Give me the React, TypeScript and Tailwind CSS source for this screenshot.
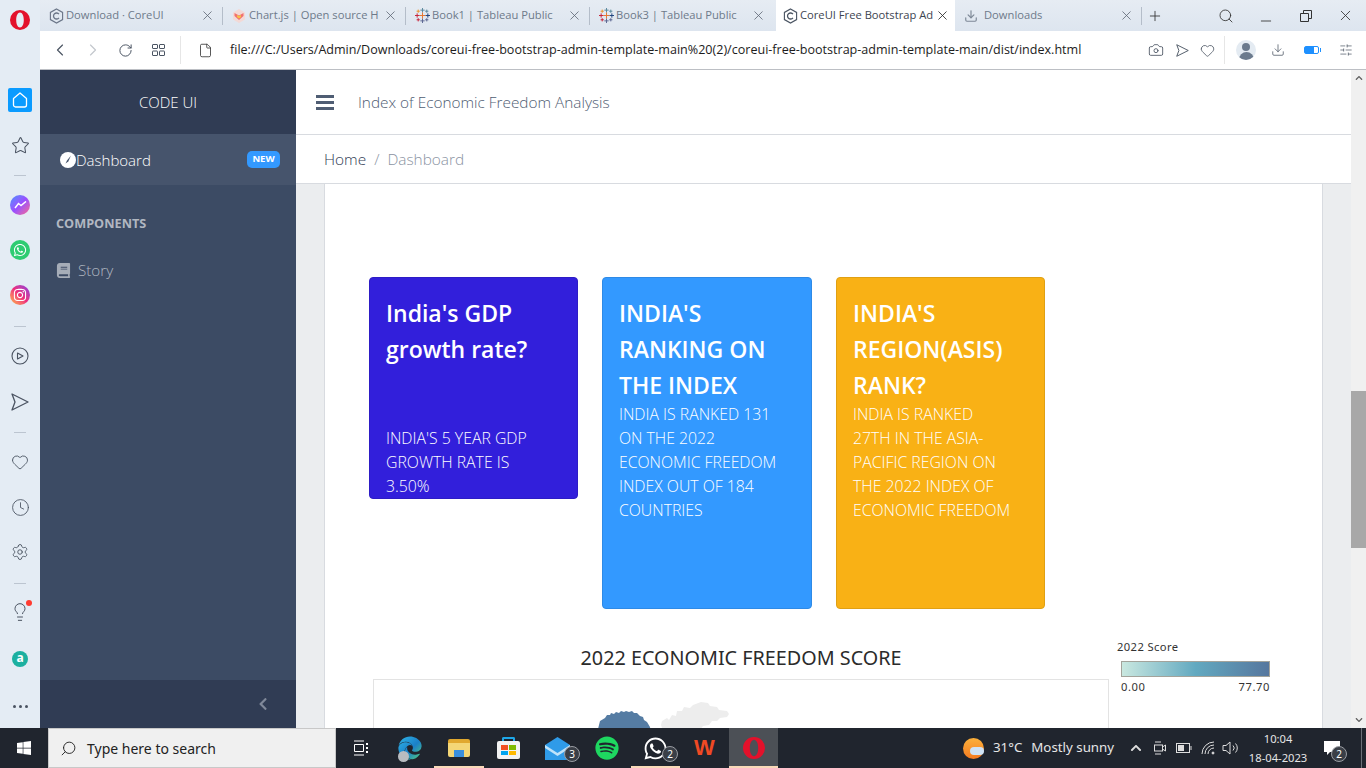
import { ChevronLeft, ChevronRight, RotateCw, File, Camera, Heart, Download, SlidersHorizontal, Star, X, Plus, Search, Minus, Clock, Settings, Lightbulb } from 'lucide-react';
import { FaWhatsapp, FaInstagram, FaSpotify, FaWindows, FaChevronUp, FaChevronDown, FaChevronLeft, FaBook, FaEdge } from 'react-icons/fa';
import type { ReactNode } from 'react';

function CoreIcon({ dark }: { dark?: boolean }) {
  const color = dark ? '#4b5563' : '#6b7688';
  return (
    <svg width="15" height="16" viewBox="0 0 16 17" fill="none" stroke={color} strokeWidth="1.2">
      <path d="M8 1l6.5 3.7v7.6L8 16l-6.5-3.7V4.7z" />
      <path d="M10.6 6.6A3.2 3.2 0 1 0 10.6 10.4" strokeWidth="1.4" />
    </svg>
  );
}

function TableauIcon() {
  const marks: [number, number, string, number][] = [
    [7, 7, '#e8762d', 3], [7, 2, '#59879b', 2], [7, 12, '#5b6591', 2],
    [2, 7, '#c72037', 2], [12, 7, '#1f447e', 2], [3, 3, '#eb912b', 1.5], [11, 3, '#59879b', 1.5],
    [3, 11, '#c72037', 1.5], [11, 11, '#5b6591', 1.5],
  ];
  return (
    <svg width="15" height="15" viewBox="0 0 14 14" fill="none" strokeWidth="0.9">
      {marks.map(([x, y, c, r]) => (
        <path key={`${x}-${y}`} stroke={c} d={`M${x - r} ${y}H${x + r}M${x} ${y - r}V${y + r}`} />
      ))}
    </svg>
  );
}

function ChartIcon() {
  return (
    <svg width="14" height="14" viewBox="0 0 14 14">
      <path d="M7 0l6 3.5v7L7 14l-6-3.5v-7z" fill="#f3d9d6" />
      <path d="M2.5 4l4.5 2.5L11.5 4v3L7 11 2.5 7z" fill="#f2716d" />
      <path d="M5 6l2 1 2-1v2L7 9.5 5 8z" fill="#f6c343" />
    </svg>
  );
}

function OperaLogo({ size }: { size: number }) {
  return (
    <svg width={size} height={size} viewBox="0 0 20 20">
      <path fillRule="evenodd" fill="#e3112b" d="M10 0a10 10 0 1 0 0 20 10 10 0 0 0 0-20zm0 2.5c2.3 0 3.8 3.3 3.8 7.5s-1.5 7.5-3.8 7.5S6.2 14.2 6.2 10 7.7 2.5 10 2.5z" />
    </svg>
  );
}

function SendArrow({ size, color }: { size: number; color: string }) {
  return (
    <svg width={size} height={size} viewBox="0 0 18 18" fill="none" stroke={color} strokeWidth="1.3" strokeLinejoin="round">
      <path d="M1 1l16 8-16 8 3-8z" />
    </svg>
  );
}

function Tab({ w, icon, label, active, noDivider, xColor, labelClass }: { w: string; icon: ReactNode; label: string; active?: boolean; noDivider?: boolean; xColor?: string; labelClass?: string }) {
  return (
    <div className={`${w} h-full flex items-center shrink-0 ${active ? 'bg-white' : ''}`}>
      <span className="w-[16px] flex justify-center shrink-0">{icon}</span>
      <span className={`${labelClass ?? 'ml-[2px]'} flex-1 min-w-0 whitespace-nowrap text-[11.2px] ${active ? 'text-[#3c4450]' : 'text-[#6e7a8a]'}`}>{label}</span>
      <X size={15} strokeWidth={1.3} color={xColor ?? '#5f6875'} className="ml-[4px] shrink-0" />
      {!noDivider && <span className="ml-[7px] w-px h-[18px] bg-[#b4bdc9] shrink-0" />}
    </div>
  );
}

function TabStrip() {
  return (
    <div className="h-[31px] flex items-stretch bg-gradient-to-b from-[#e6ecf3] to-[#dde5ef]">
      <Tab w="w-[183px] pl-2" icon={<CoreIcon />} label="Download · CoreUI" />
      <Tab w="w-[183px] pl-2" icon={<ChartIcon />} label="Chart.js | Open source H" />
      <Tab w="w-[184px] pl-2" icon={<TableauIcon />} label="Book1 | Tableau Public" />
      <Tab w="w-[186px] pl-2 pr-[10px]" icon={<TableauIcon />} label="Book3 | Tableau Public" noDivider />
      <Tab w="w-[179px] pl-[6px] pr-[5px]" icon={<CoreIcon dark />} label="CoreUI Free Bootstrap Ad" active noDivider xColor="#222" />
      <Tab w="w-[187px] pl-2" icon={<Download size={14} color="#7d8896" />} label="Downloads" labelClass="ml-[5px]" />
      <div className="flex items-center flex-1">
        <Plus size={16} strokeWidth={1.3} color="#333" className="ml-[5px]" />
        <Search size={16} strokeWidth={1.3} color="#333" className="ml-[55px]" />
        <Minus size={16} strokeWidth={1.3} color="#333" className="ml-[24px] mt-[10px]" />
        <svg width="12" height="12" viewBox="0 0 12 12" fill="none" stroke="#333" className="ml-[26px]">
          <path d="M0.5 3.5h8v8h-8zM3.5 3.5v-3h8v8h-3" />
        </svg>
        <X size={17} strokeWidth={1.2} color="#333" className="ml-[25px]" />
      </div>
    </div>
  );
}

function AddressBar() {
  return (
    <div className="h-[39px] bg-white border-b border-[#bcbfc4] flex items-center text-[#4b5563]">
      <ChevronLeft size={20} strokeWidth={1.4} className="ml-[10px]" />
      <ChevronRight size={20} strokeWidth={1.4} color="#c3c7cd" className="ml-[13px]" />
      <RotateCw size={15} strokeWidth={1.6} className="ml-[15px]" />
      <svg width="13" height="12" viewBox="0 0 13 12" fill="none" stroke="#4b5563" className="ml-[19px]">
        <rect x="0.5" y="0.5" width="5" height="4" rx="0.5" />
        <rect x="7.5" y="0.5" width="5" height="4" rx="0.5" />
        <rect x="0.5" y="7" width="5" height="4.5" rx="0.5" />
        <rect x="7.5" y="7" width="5" height="4.5" rx="0.5" />
      </svg>
      <span className="ml-[15px] w-px h-[28px] bg-[#e6e6e6]" />
      <File size={15} strokeWidth={1.3} color="#333" className="ml-[17px]" />
      <span className="ml-[17px] w-[902px] text-[12.55px] text-[#1c1c1c] whitespace-nowrap">
        file:///C:/Users/Admin/Downloads/coreui-free-bootstrap-admin-template-main%20(2)/coreui-free-bootstrap-admin-template-main/dist/index.html
      </span>
      <Camera size={16} strokeWidth={1.3} className="ml-[16px]" />
      <span className="ml-[12px]"><SendArrow size={13} color="#4b5563" /></span>
      <Heart size={15} strokeWidth={1.3} className="ml-[11px]" />
      <span className="ml-[9px] w-px h-[28px] bg-[#e6e6e6]" />
      <span className="ml-[11px] w-[20px] h-[20px] rounded-full bg-[#e4ebf2] overflow-hidden flex flex-col items-center">
        <span className="mt-[3px] w-[8px] h-[8px] rounded-full bg-[#6b7a8d]" />
        <span className="mt-[1px] w-[15px] h-[8px] rounded-t-full bg-[#6b7a8d]" />
      </span>
      <Download size={14} strokeWidth={1.3} className="ml-[15px]" />
      <span className="ml-[19px] flex items-center">
        <span className="w-[15px] h-[8px] rounded-[2px] border border-[#1e90ff] bg-gradient-to-r from-[#1e90ff] from-70% to-white to-70%" />
        <span className="w-[1px] h-[4px] bg-[#1e90ff] ml-px" />
      </span>
      <SlidersHorizontal size={14} strokeWidth={1.2} className="ml-[18px]" />
    </div>
  );
}

function RailSlot({ h, children }: { h: string; children?: ReactNode }) {
  return <div className={`${h} flex items-center justify-center w-full shrink-0`}>{children}</div>;
}

const RailSep = () => <span className="w-[12px] h-px bg-[#bcc5d0]" />;

function LeftRail() {
  const stroke = '#4a5361';
  return (
    <div className="w-[40px] shrink-0 h-full bg-[#e4ecf4] flex flex-col">
      <RailSlot h="h-[40px]"><OperaLogo size={20} /></RailSlot>
      <div className="h-[38px] shrink-0" />
      <RailSlot h="h-[44px]">
        <span className="w-[24px] h-[24px] rounded-[2px] bg-[#0a9bff] flex items-center justify-center">
          <svg width="16" height="16" viewBox="0 0 16 16" fill="none" stroke="white" strokeWidth="1.3" strokeLinejoin="round">
            <path d="M1.5 6.5L8 1l6.5 5.5V13a2 2 0 0 1-2 2h-9a2 2 0 0 1-2-2z" />
          </svg>
        </span>
      </RailSlot>
      <RailSlot h="h-[46px]"><Star size={19} strokeWidth={1.3} color={stroke} /></RailSlot>
      <RailSlot h="h-[14px]"><RailSep /></RailSlot>
      <RailSlot h="h-[46px]">
        <span className="w-[20px] h-[20px] rounded-full bg-gradient-to-br from-[#2f8dff] via-[#9a4dff] to-[#ff5c87] flex items-center justify-center">
          <svg width="13" height="8" viewBox="0 0 13 8" fill="none" stroke="white" strokeWidth="1.5"><path d="M1 7l3.5-4.5 2.5 2 5-4" /></svg>
        </span>
      </RailSlot>
      <RailSlot h="h-[44px]">
        <span className="w-[20px] h-[20px] rounded-full bg-[#2ecc71] flex items-center justify-center"><FaWhatsapp size={14} color="white" /></span>
      </RailSlot>
      <RailSlot h="h-[46px]">
        <span className="w-[20px] h-[20px] rounded-full bg-gradient-to-tr from-[#fdb32b] via-[#ee2a7b] to-[#8a2be2] flex items-center justify-center"><FaInstagram size={14} color="white" /></span>
      </RailSlot>
      <RailSlot h="h-[16px]"><RailSep /></RailSlot>
      <RailSlot h="h-[44px]">
        <svg width="18" height="18" viewBox="0 0 18 18" fill="none" stroke={stroke} strokeWidth="1.1" strokeLinejoin="round">
          <circle cx="9" cy="9" r="8" /><path d="M6.5 6l5.5 3-5.5 3z" />
        </svg>
      </RailSlot>
      <RailSlot h="h-[48px]"><SendArrow size={18} color={stroke} /></RailSlot>
      <RailSlot h="h-[12px]"><RailSep /></RailSlot>
      <RailSlot h="h-[48px]"><Heart size={18} strokeWidth={1.2} color={stroke} /></RailSlot>
      <RailSlot h="h-[42px]"><Clock size={19} strokeWidth={1.1} color={stroke} /></RailSlot>
      <RailSlot h="h-[48px]"><Settings size={18} strokeWidth={1.2} color={stroke} /></RailSlot>
      <RailSlot h="h-[14px]"><RailSep /></RailSlot>
      <RailSlot h="h-[44px]">
        <span className="relative flex">
          <Lightbulb size={20} strokeWidth={1.2} color={stroke} />
          <span className="absolute -top-[2px] -right-[2px] w-[6px] h-[6px] rounded-full bg-[#ff3b30]" />
        </span>
      </RailSlot>
      <RailSlot h="h-[50px]">
        <span className="w-[16px] h-[16px] rounded-full bg-[#1cb0a0] flex items-center justify-center text-white text-[12px] font-bold leading-none pb-[2px]">a</span>
      </RailSlot>
      <RailSlot h="h-[44px]">
        <span className="flex gap-[3px]">
          <span className="w-[3px] h-[3px] rounded-full bg-[#4a5361]" />
          <span className="w-[3px] h-[3px] rounded-full bg-[#4a5361]" />
          <span className="w-[3px] h-[3px] rounded-full bg-[#4a5361]" />
        </span>
      </RailSlot>
    </div>
  );
}

function Sidebar() {
  return (
    <aside className="w-[256px] shrink-0 bg-[#3c4b64] flex flex-col text-white">
      <div className="h-[64px] bg-[#303c54] flex items-center justify-center text-[15px] font-light">CODE UI</div>
      <div className="h-[51px] bg-[#46546c] flex items-center pl-[20px] pr-[16px]">
        <svg width="16" height="16" viewBox="0 0 16 16" className="shrink-0">
          <circle cx="8" cy="8" r="8" fill="white" />
          <path d="M11 3.5L7 8.5l-1.5 3 2.8-2z" fill="#46546c" />
        </svg>
        <span className="text-[15px] font-light flex-1 pt-px">Dashboard</span>
        <span className="w-[33px] h-[17px] rounded-[5px] bg-[#3399ff] flex items-center justify-center text-[9.5px] font-bold">NEW</span>
      </div>
      <div className="pl-[16px] mt-[29px] text-[12.7px] font-bold text-[#b1b7c1] leading-[18px]">COMPONENTS</div>
      <div className="pl-[16px] mt-[27px] flex items-center h-[22px]">
        <FaBook size={15} color="#a6adb8" />
        <span className="ml-[7px] text-[15.2px] font-light text-[#b1b7c1]">Story</span>
      </div>
      <div className="mt-auto h-[48px] bg-[#303c54] flex items-center justify-end pr-[26px]">
        <FaChevronLeft size={14} color="#7f8899" />
      </div>
    </aside>
  );
}

function InfoCard({ color, title, body, cardClass, bodyClass }: { color: string; title: string[]; body: string[]; cardClass: string; bodyClass?: string }) {
  return (
    <div className={`rounded-[4px] border text-white pt-4 px-4 shrink-0 ${color} ${cardClass}`}>
      <h5 className="mt-[1px] -mb-[1px] text-[23px] leading-[36px] font-semibold">
        {title.map((line) => (
          <div key={line} className="whitespace-nowrap">{line}</div>
        ))}
      </h5>
      <div className={`text-[15.8px] font-light leading-[24px] ${bodyClass ?? ''}`}>
        {body.map((line) => (
          <div key={line} className="whitespace-nowrap">{line}</div>
        ))}
      </div>
    </div>
  );
}

function ScoreMap() {
  return (
    <div className="mt-[7px] border border-[#e3e3e3] h-[100px] pl-[222px] pt-[21px]">
      <svg width="138" height="30" viewBox="0 0 138 30">
        <path d="M2 28l2-8 5-3 2-3 3 0 1-2 3 1 2-2 3 1 2-2 3 1 2-1 3 1 3-1 2 2 3 0 3 3 3 1 1 3 3 2 3 5 1 6z" fill="#557ca3" />
        <path d="M66 20l5-3 2 2 3-5 4 1 1-5 5 0 2-4 6 1 3-3 8-3 7 1 2 3 7 1 2 3 8 1 2 3-2 3-7 1-3 3-5 0-3 4-6 1-4 5-22 0-4-3-6 0-4 3-2-6z" fill="#ededed" />
      </svg>
    </div>
  );
}

function ContentCard() {
  return (
    <div className="mx-[28px] flex-1 bg-white border-x border-[#d8dbe0] overflow-hidden pt-[93px] pl-[44px]">
      <div className="flex items-start gap-6">
        <InfoCard
          color="bg-[#321fdb]"
          title={["India's GDP", 'growth rate?']}
          body={["INDIA'S 5 YEAR GDP", 'GROWTH RATE IS', '3.50%']}
          cardClass="w-[209px] border-[#2d1cc5]"
          bodyClass="mt-[60px]"
        />
        <InfoCard
          color="bg-[#3399ff]"
          title={["INDIA'S", 'RANKING ON', 'THE INDEX']}
          body={['INDIA IS RANKED 131', 'ON THE 2022', 'ECONOMIC FREEDOM', 'INDEX OUT OF 184', 'COUNTRIES']}
          cardClass="w-[210px] pb-[86px] border-[#2e8ae6]"
        />
        <InfoCard
          color="bg-[#f9b115]"
          title={["INDIA'S", 'REGION(ASIS)', 'RANK?']}
          body={['INDIA IS RANKED', '27TH IN THE ASIA-', 'PACIFIC REGION ON', 'THE 2022 INDEX OF', 'ECONOMIC FREEDOM']}
          cardClass="w-[209px] pb-[86px] border-[#e0a013]"
        />
      </div>
      <div className="flex ml-[4px] mt-[30px]">
        <div className="w-[736px] shrink-0">
          <div className="mt-[5px] text-center text-[19.8px] leading-[28px] text-[#2b2b2b] font-['Noto_Sans',sans-serif]">2022 ECONOMIC FREEDOM SCORE</div>
          <ScoreMap />
        </div>
        <div className="ml-[8px] w-[153px] text-[#333] text-[11.2px] tracking-[0.4px] font-['Noto_Sans',sans-serif]">
          <div className="leading-[16px]">2022 Score</div>
          <div className="ml-[4px] mt-[6px] w-[149px] h-[16px] border border-[#a3a39b] bg-gradient-to-r from-[#c9e8e0] via-[#62a9c0] to-[#56779e]" />
          <div className="ml-[4px] mt-px w-[149px] flex justify-between leading-[18px] tracking-[0.6px]">
            <span>0.00</span>
            <span>77.70</span>
          </div>
        </div>
      </div>
    </div>
  );
}

function PageScrollbar() {
  return (
    <div className="w-[15px] shrink-0 bg-[#f0f0f0] flex flex-col items-center">
      <FaChevronUp size={8} color="#606060" className="mt-[4px]" />
      <div className="mt-[309px] w-full h-[157px] bg-[#a8a8a8]" />
      <FaChevronDown size={8} color="#606060" className="mt-auto mb-[4px]" />
    </div>
  );
}

function Page() {
  return (
    <div className="flex-1 flex min-h-0 min-w-0">
      <Sidebar />
      <div className="flex-1 flex flex-col min-w-0 bg-[#ebedef]">
        <div className="h-[65px] bg-white border-b border-[#d8dbe0] flex items-center shrink-0">
          <span className="ml-[20px] flex flex-col gap-[3px]">
            <span className="w-[18px] h-[3px] bg-[#4f5d73]" />
            <span className="w-[18px] h-[3px] bg-[#4f5d73]" />
            <span className="w-[18px] h-[3px] bg-[#4f5d73]" />
          </span>
          <span className="ml-[24px] text-[15.35px] font-light text-[#4f5d73] leading-[22px]">Index of Economic Freedom Analysis</span>
        </div>
        <div className="h-[49px] bg-white border-b border-[#d8dbe0] flex items-center pl-[28px] shrink-0 text-[15.4px] font-light leading-[22px] pt-[2px]">
          <span className="text-[#303c54]">Home</span>
          <span className="mx-[8px] text-[#8a93a2]">/</span>
          <span className="text-[#8a93a2]">Dashboard</span>
        </div>
        <ContentCard />
      </div>
      <PageScrollbar />
    </div>
  );
}

function TaskIcon({ w, active, underline, children }: { w: string; active?: boolean; underline?: boolean; children: ReactNode }) {
  return (
    <div className={`${w} h-full flex items-center justify-center relative shrink-0 ${active ? 'bg-[#4c5056]' : ''}`}>
      {children}
      {underline && <span className="absolute bottom-0 inset-x-0 h-[2px] bg-[#f8d9b8]" />}
    </div>
  );
}

function CountBadge({ n }: { n: number }) {
  return (
    <span className="absolute top-[18px] right-[2px] w-[16px] h-[16px] rounded-full bg-[#3a3f47] border border-[#9a9da3] text-white text-[10px] flex items-center justify-center leading-none">{n}</span>
  );
}

function Taskbar() {
  return (
    <div className="h-[40px] shrink-0 bg-[#20252e] flex items-stretch text-white font-['Noto_Sans',sans-serif]">
      <div className="w-[48px] flex items-center justify-center shrink-0"><FaWindows size={16} /></div>
      <div className="w-[288px] bg-[#f0f0f0] border border-[#c8c8c8] flex items-center shrink-0">
        <Search size={17} strokeWidth={1.3} color="#222" className="ml-[11px] -scale-x-100" />
        <span className="ml-[10px] text-[14px] text-[#222]">Type here to search</span>
      </div>
      <TaskIcon w="w-[49px]">
        <svg width="16" height="16" viewBox="0 0 16 16" fill="none" stroke="white" strokeWidth="1">
          <path d="M1 1h10M1 15h10M1.5 4.5h9v7h-9z" /><path d="M14 3v2M14 7v2M14 11v2" strokeWidth="2" />
        </svg>
      </TaskIcon>
      <TaskIcon w="w-[49px]">
        <svg width="0" height="0" className="shrink-0">
          <defs>
            <linearGradient id="edgeFill" x1="0" y1="0" x2="1" y2="1">
              <stop offset="0%" stopColor="#2fb6e8" />
              <stop offset="55%" stopColor="#1b80c8" />
              <stop offset="100%" stopColor="#56d07a" />
            </linearGradient>
          </defs>
        </svg>
        <FaEdge size={24} fill="url(#edgeFill)" />
        <span className="absolute left-[13px] bottom-[6px] w-[11px] h-[11px] rounded-full bg-[#b9bcc0]" />
      </TaskIcon>
      <TaskIcon w="w-[50px]" underline>
        <span className="w-[22px] h-[18px] bg-[#f4d676] rounded-[2px] border-t-[4px] border-[#e1a82e] flex items-end justify-center">
          <span className="w-[10px] h-[7px] bg-[#3a8fdd]" />
        </span>
      </TaskIcon>
      <TaskIcon w="w-[49px]">
        <span className="flex flex-col items-center">
          <span className="w-[13px] h-[4px] border-2 border-b-0 border-[#1ea7e8] rounded-t-[2px]" />
          <span className="w-[23px] h-[18px] bg-[#f2f2f2] rounded-[2px] grid grid-cols-2 gap-[1px] p-[4px]">
            <span className="bg-[#f25022]" /><span className="bg-[#7fba00]" /><span className="bg-[#00a4ef]" /><span className="bg-[#ffb900]" />
          </span>
        </span>
      </TaskIcon>
      <TaskIcon w="w-[49px]">
        <svg width="25" height="23" viewBox="0 0 25 23">
          <path d="M0 8L12.5 0 25 8v15H0z" fill="#2f9be8" />
          <path d="M0 8l12.5 8L25 8v3L12.5 19 0 11z" fill="#bfe3fa" />
        </svg>
        <CountBadge n={3} />
      </TaskIcon>
      <TaskIcon w="w-[49px]"><FaSpotify size={24} color="#1ed760" /></TaskIcon>
      <TaskIcon w="w-[49px]" underline>
        <FaWhatsapp size={25} />
        <CountBadge n={2} />
      </TaskIcon>
      <TaskIcon w="w-[49px]">
        <span className="text-[#f04a24] font-black text-[22px] leading-none font-['Liberation_Sans',sans-serif]">W</span>
      </TaskIcon>
      <TaskIcon w="w-[49px]" active underline><OperaLogo size={22} /></TaskIcon>
      <div className="ml-[185px] flex items-center flex-1">
        <span className="w-[21px] h-[21px] rounded-full bg-gradient-to-b from-[#fbb03b] to-[#f47a1f] flex items-end justify-end">
          <span className="w-[14px] h-[8px] rounded-full bg-[#cfe2f5] mb-[4px]" />
        </span>
        <span className="ml-[9px] text-[13.3px] text-[#e6e6e6]">31°C</span>
        <span className="ml-[9px] text-[13.3px] text-[#e6e6e6]">Mostly sunny</span>
        <FaChevronUp size={12} color="#ddd" className="ml-[16px]" />
        <svg width="12" height="16" viewBox="0 0 12 16" fill="none" stroke="#ddd" className="ml-[12px]">
          <rect x="0.5" y="5" width="8" height="6" /><path d="M8.5 7l3-2v6l-3-2M1 2h6M1 14h6" />
        </svg>
        <svg width="16" height="10" viewBox="0 0 16 10" fill="none" stroke="#ddd" className="ml-[10px]">
          <rect x="0.5" y="0.5" width="13" height="9" /><rect x="2" y="2" width="6" height="6" fill="#ddd" stroke="none" /><path d="M15 3v4" />
        </svg>
        <svg width="14" height="14" viewBox="0 0 14 14" fill="none" stroke="#ddd" className="ml-[9px]">
          <path d="M1 13A12 12 0 0 1 13 1M4 13a9 9 0 0 1 9-9M7 13a6 6 0 0 1 6-6" /><circle cx="12" cy="12" r="1" fill="#ddd" />
        </svg>
        <svg width="17" height="14" viewBox="0 0 17 14" fill="none" stroke="#ddd" className="ml-[7px]">
          <path d="M1 4.5h3L8 1v12L4 9.5H1zM11 4.5a3.5 3.5 0 0 1 0 5M13.5 2.5a6.5 6.5 0 0 1 0 9" />
        </svg>
        <div className="ml-[10px] w-[58px] flex flex-col items-center text-[11.2px] leading-[19px] text-[#e6e6e6] whitespace-nowrap">
          <span>10:04</span>
          <span>18-04-2023</span>
        </div>
        <span className="relative ml-[17px] flex">
          <svg width="16" height="15" viewBox="0 0 16 15" fill="white"><path d="M0 0h16v11H6l-3 3v-3H0z" /></svg>
          <span className="absolute top-[5px] left-[7px] w-[16px] h-[16px] rounded-full bg-[#3a3f47] border border-[#9a9da3] text-[10px] flex items-center justify-center leading-none">2</span>
        </span>
        <span className="ml-auto mr-[4px] w-px h-full bg-[#6b7078]" />
      </div>
    </div>
  );
}

export default function App() {
  return (
    <div className="w-[1366px] h-[768px] flex flex-col overflow-hidden font-['Open_Sans',sans-serif]">
      <div className="flex-1 min-h-0 flex">
        <LeftRail />
        <div className="flex-1 min-w-0 flex flex-col">
          <TabStrip />
          <AddressBar />
          <Page />
        </div>
      </div>
      <Taskbar />
    </div>
  );
}
